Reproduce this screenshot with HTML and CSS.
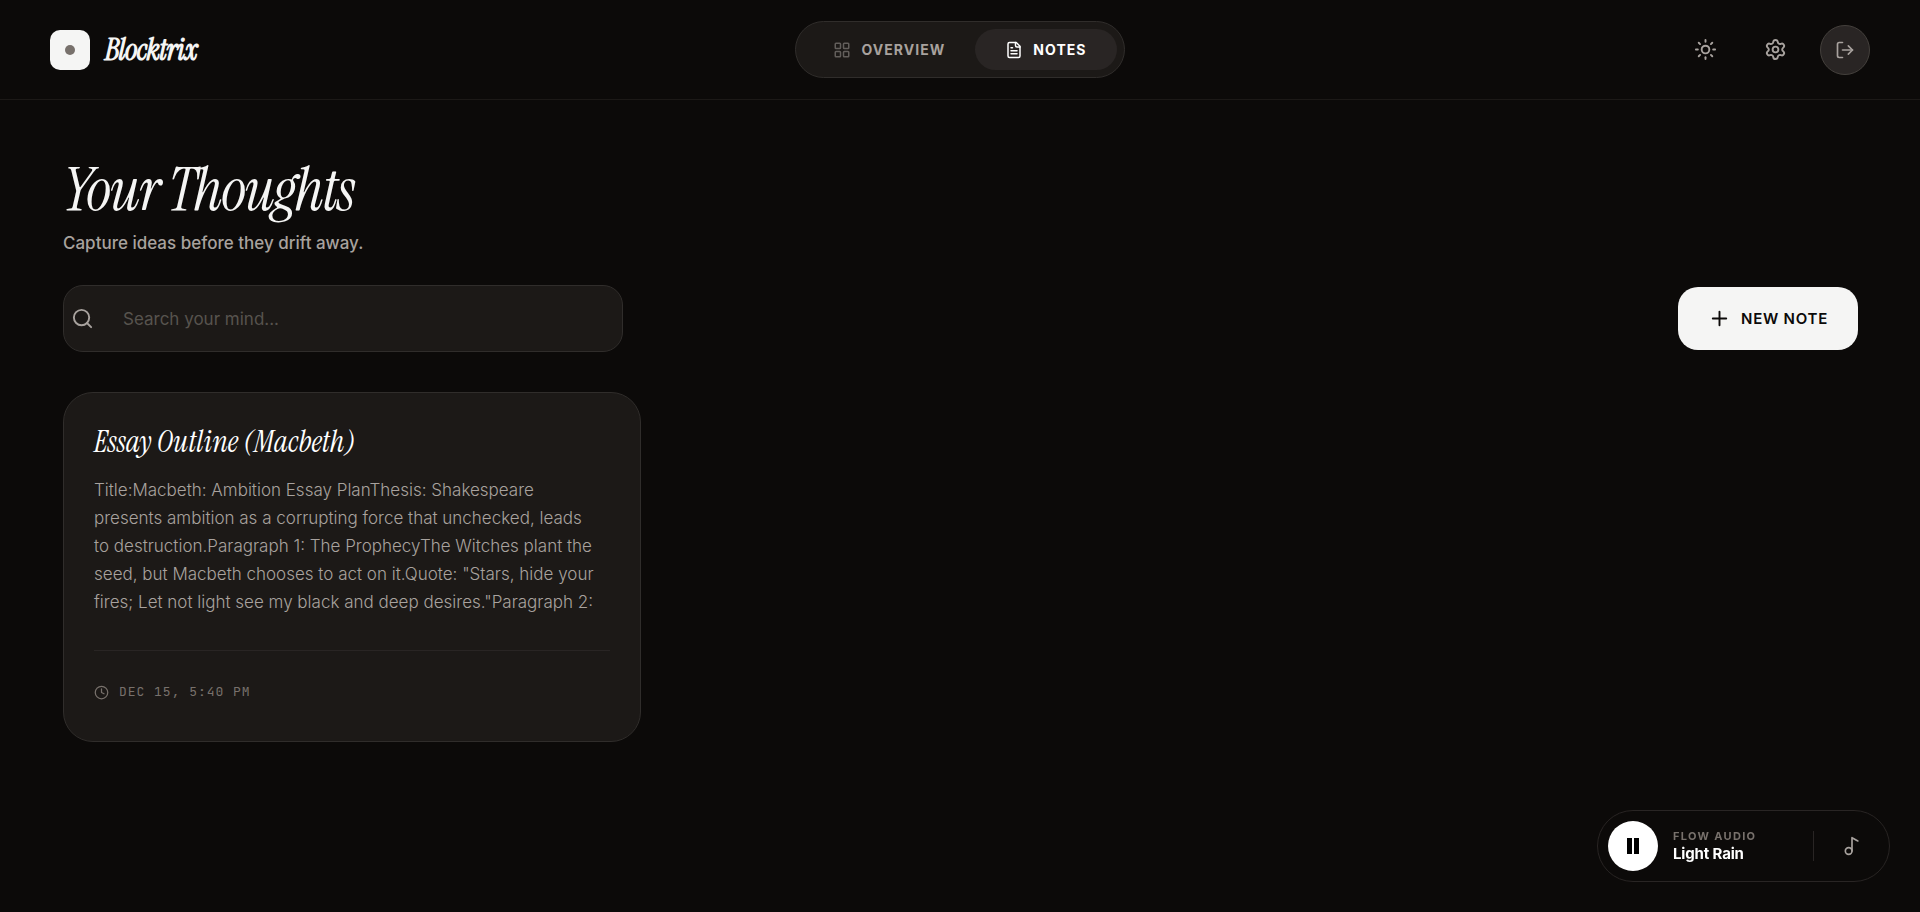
FILE: index.html
```html
<!DOCTYPE html>
<html lang="en">
<head>
  <meta charset="UTF-8">
  <meta name="viewport" content="width=device-width, initial-scale=1.0">
  <title>Blocktrix</title>
  <link rel="stylesheet" href="styles.css">
</head>
<body>
  <header class="topbar">
    <a class="brand" href="#">
      <span class="brand-mark"><span class="brand-dot"></span></span>
      <span class="brand-name">Blocktrix</span>
    </a>

    <nav class="tabs">
      <button class="tab" type="button">
        <svg class="icon tab-icon" viewBox="0 0 24 24"><rect x="3" y="3" width="7" height="7" rx="1"/><rect x="14" y="3" width="7" height="7" rx="1"/><rect x="14" y="14" width="7" height="7" rx="1"/><rect x="3" y="14" width="7" height="7" rx="1"/></svg>
        Overview
      </button>
      <button class="tab active" type="button">
        <svg class="icon tab-icon" viewBox="0 0 24 24"><path d="M15 2H6a2 2 0 0 0-2 2v16a2 2 0 0 0 2 2h12a2 2 0 0 0 2-2V7Z"/><path d="M14 2v4a2 2 0 0 0 2 2h4"/><path d="M10 9H8"/><path d="M16 13H8"/><path d="M16 17H8"/></svg>
        Notes
      </button>
    </nav>

    <div class="actions">
      <button class="icon-button" type="button" aria-label="Toggle theme">
        <svg class="icon action-icon" viewBox="0 0 24 24"><circle cx="12" cy="12" r="4"/><path d="M12 2v2"/><path d="M12 20v2"/><path d="m4.93 4.93 1.41 1.41"/><path d="m17.66 17.66 1.41 1.41"/><path d="M2 12h2"/><path d="M20 12h2"/><path d="m6.34 17.66-1.41 1.41"/><path d="m19.07 4.93-1.41 1.41"/></svg>
      </button>
      <button class="icon-button" type="button" aria-label="Settings">
        <svg class="icon action-icon" viewBox="0 0 24 24"><path d="M9.671 4.136a2.34 2.34 0 0 1 4.659 0 2.34 2.34 0 0 0 3.319 1.915 2.34 2.34 0 0 1 2.33 4.033 2.34 2.34 0 0 0 0 3.831 2.34 2.34 0 0 1-2.33 4.033 2.34 2.34 0 0 0-3.319 1.915 2.34 2.34 0 0 1-4.659 0 2.34 2.34 0 0 0-3.32-1.915 2.34 2.34 0 0 1-2.33-4.033 2.34 2.34 0 0 0 0-3.831A2.34 2.34 0 0 1 6.35 6.051a2.34 2.34 0 0 0 3.319-1.915"/><circle cx="12" cy="12" r="3"/></svg>
      </button>
      <button class="icon-button filled" type="button" aria-label="Log out">
        <svg class="icon small-icon" viewBox="0 0 24 24"><path d="M9 21H5a2 2 0 0 1-2-2V5a2 2 0 0 1 2-2h4"/><path d="m16 17 5-5-5-5"/><path d="M21 12H9"/></svg>
      </button>
    </div>
  </header>

  <main class="content">
    <h1 class="page-title">Your Thoughts</h1>
    <p class="page-subtitle">Capture ideas before they drift away.</p>

    <div class="toolbar">
      <label class="search">
        <svg class="icon action-icon" viewBox="0 0 24 24"><circle cx="11" cy="11" r="8"/><path d="m21 21-4.3-4.3"/></svg>
        <input class="search-input" type="text" placeholder="Search your mind..." aria-label="Search notes">
      </label>
      <button class="new-note" type="button">
        <svg class="icon action-icon" viewBox="0 0 24 24"><path d="M5 12h14"/><path d="M12 5v14"/></svg>
        New Note
      </button>
    </div>

    <section class="notes-grid">
      <article class="note">
        <h2 class="note-title">Essay Outline (Macbeth)</h2>
        <p class="note-text">Title:Macbeth: Ambition Essay PlanThesis: Shakespeare presents ambition as a corrupting force that unchecked, leads to destruction.Paragraph 1: The ProphecyThe Witches plant the seed, but Macbeth chooses to act on it.Quote: "Stars, hide your fires; Let not light see my black and deep desires."Paragraph 2:</p>
        <div class="note-meta">
          <svg class="icon clock-icon" viewBox="0 0 24 24"><circle cx="12" cy="12" r="10"/><path d="M12 6v6l4 2"/></svg>
          <time>Dec 15, 5:40 PM</time>
        </div>
      </article>
    </section>
  </main>

  <!-- Floating audio player -->
  <aside class="player">
    <button class="play-button" type="button" aria-label="Pause">
      <svg class="pause-icon" viewBox="0 0 20 20"><rect x="4" y="2" width="5" height="16"/><rect x="11" y="2" width="5" height="16"/></svg>
    </button>
    <div class="track">
      <span class="track-label">Flow Audio</span>
      <span class="track-name">Light Rain</span>
    </div>
    <button class="track-button" type="button" aria-label="Choose sound">
      <svg class="icon small-icon" viewBox="0 0 24 24"><circle cx="8" cy="18" r="4"/><path d="M12 18V2l7 4"/></svg>
    </button>
  </aside>
</body>
</html>
```

FILE: styles.css
```css
* {
  box-sizing: border-box;
}

body {
  margin: 0;
  min-height: 100vh;
  background: #0c0a09;
  color: #f5f5f4;
  font-family: Inter, "Liberation Sans", sans-serif;
}

button {
  border: none;
  background: none;
  color: inherit;
  font-family: inherit;
  cursor: pointer;
}

h1,
h2,
p {
  margin: 0;
}

.icon {
  fill: none;
  stroke: currentColor;
  stroke-width: 2;
  stroke-linecap: round;
  stroke-linejoin: round;
  flex-shrink: 0;
}

.action-icon {
  width: 23px;
  height: 23px;
}

.small-icon {
  width: 20px;
  height: 20px;
}

/* Top bar */
.topbar {
  display: grid;
  grid-template-columns: 1fr auto 1fr;
  align-items: center;
  height: 100px;
  padding: 0 50px;
  border-bottom: 1px solid #1c1917;
}

.brand {
  display: flex;
  align-items: center;
  gap: 15px;
  color: #f5f5f4;
  text-decoration: none;
}

.brand-mark {
  display: flex;
  align-items: center;
  justify-content: center;
  width: 40px;
  height: 40px;
  border-radius: 10px;
  background: #f5f5f4;
}

.brand-dot {
  width: 10px;
  height: 10px;
  border-radius: 50%;
  background: #78716c;
}

.brand-name {
  font-family: "Instrument Serif", "Liberation Serif", serif;
  font-size: 30px;
  font-style: italic;
  font-weight: 700;
  line-height: 40px;
  letter-spacing: -0.025em;
}

.tabs {
  display: flex;
  padding: 7px;
  border: 1px solid #302d2b;
  border-radius: 30px;
  background: #1c1917;
}

.tab {
  display: flex;
  align-items: center;
  gap: 10px;
  height: 41px;
  padding: 0 30px;
  border-radius: 21px;
  color: #a8a29e;
  font-size: 14px;
  font-weight: 700;
  letter-spacing: 0.075em;
  text-transform: uppercase;
}

.tab .tab-icon {
  opacity: 0.5;
}

.tab.active {
  background: #292524;
  color: #fff;
}

.tab.active .tab-icon {
  opacity: 1;
}

.tab-icon {
  width: 18px;
  height: 18px;
}

.actions {
  display: flex;
  justify-content: flex-end;
  gap: 20px;
}

.icon-button {
  display: flex;
  align-items: center;
  justify-content: center;
  width: 50px;
  height: 50px;
  padding: 0;
  border-radius: 50%;
  color: #a8a29e;
}

.icon-button.filled {
  border: 1px solid #44403c;
  background: #292524;
}

/* Page */
.content {
  padding: 50px 62px 50px 63px;
}

.page-title {
  font-family: "Instrument Serif", "Liberation Serif", serif;
  font-size: 60px;
  font-style: italic;
  font-weight: 400;
  line-height: 80px;
  letter-spacing: -0.025em;
}

.page-subtitle {
  color: #a8a29e;
  font-size: 17px;
  font-weight: 500;
  line-height: 26px;
}

.toolbar {
  display: flex;
  align-items: center;
  justify-content: space-between;
  margin: 29px 0 40px;
}

.search {
  display: flex;
  align-items: center;
  gap: 29px;
  width: 560px;
  height: 67px;
  padding: 0 7px;
  border: 1px solid #302d2b;
  border-radius: 20px;
  background: #1c1917;
  color: #a8a29e;
}

.search-input {
  flex: 1;
  min-width: 0;
  padding: 0;
  border: none;
  outline: none;
  background: none;
  color: #f5f5f4;
  font-family: inherit;
  font-size: 17px;
}

.search-input::placeholder {
  color: #57534e;
}

.new-note {
  display: flex;
  align-items: center;
  gap: 10px;
  height: 63px;
  padding: 0 30px;
  border-radius: 20px;
  background: #f5f5f4;
  color: #0c0a09;
  font-size: 15px;
  font-weight: 600;
  letter-spacing: 0.05em;
  text-transform: uppercase;
}

.notes-grid {
  display: grid;
  grid-template-columns: repeat(3, 1fr);
  gap: 30px;
}

.note {
  padding: 30px;
  border: 1px solid #302d2b;
  border-radius: 30px;
  background: #1c1917;
}

.note-title {
  color: #fff;
  font-family: "Instrument Serif", "Liberation Serif", serif;
  font-size: 30px;
  font-style: italic;
  font-weight: 400;
  line-height: 38px;
}

.note-text {
  margin-top: 15px;
  padding-right: 12px;
  color: #a8a29e;
  font-size: 17px;
  font-weight: 300;
  line-height: 28px;
}

.note-meta {
  display: flex;
  align-items: center;
  gap: 10px;
  margin-top: 34px;
  padding: 32px 0 10px;
  border-top: 1px solid #292524;
  color: #78716c;
  font-family: "JetBrains Mono", "Liberation Mono", monospace;
  font-size: 13px;
  line-height: 18px;
  letter-spacing: 0.075em;
  text-transform: uppercase;
}

.clock-icon {
  width: 15px;
  height: 15px;
}

/* Audio player */
.player {
  position: fixed;
  right: 30px;
  bottom: 30px;
  display: flex;
  align-items: center;
  padding: 10px 0 10px 10px;
  border: 1px solid #292524;
  border-radius: 36px;
  background: #0c0a09;
}

.play-button {
  display: flex;
  align-items: center;
  justify-content: center;
  width: 50px;
  height: 50px;
  padding: 0;
  border-radius: 50%;
  background: #fff;
  color: #000;
}

.pause-icon {
  width: 20px;
  height: 20px;
  fill: currentColor;
}

.track {
  display: flex;
  flex-direction: column;
  width: 140px;
  padding-left: 15px;
}

.track-label {
  color: #78716c;
  font-size: 11px;
  font-weight: 700;
  line-height: 16px;
  letter-spacing: 0.12em;
  text-transform: uppercase;
}

.track-name {
  color: #fff;
  font-size: 15px;
  font-weight: 700;
  line-height: 20px;
  letter-spacing: -0.01em;
}

.track-button {
  display: flex;
  align-items: center;
  justify-content: center;
  width: 76px;
  height: 30px;
  margin-left: 15px;
  padding: 0;
  border-left: 1px solid #292524;
  color: #a8a29e;
}
```
